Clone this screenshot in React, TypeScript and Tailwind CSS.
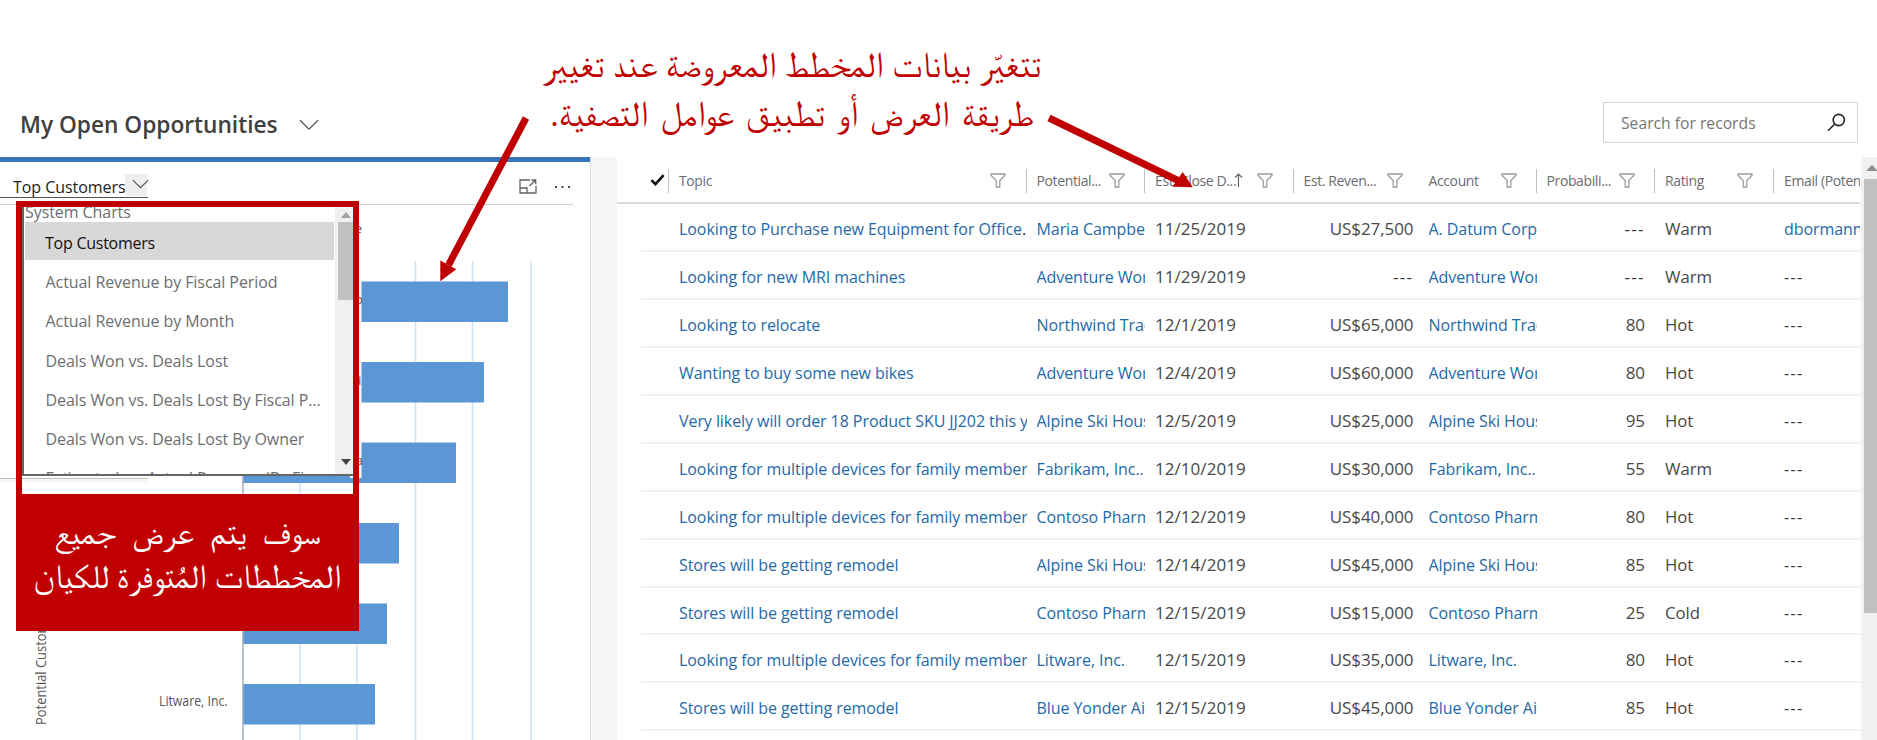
import React from "react";

type Row = {
  topic: string;
  customer: string;
  date: string;
  revenue: string;
  account: string;
  probability: string;
  rating: string;
  email: string;
};

const r = (
  topic: string,
  customer: string,
  date: string,
  revenue: string,
  account: string,
  probability: string,
  rating: string,
  email = "---",
): Row => ({ topic, customer, date, revenue, account, probability, rating, email });

const DEVICES = "Looking for multiple devices for family member";
const REMODEL = "Stores will be getting remodel";

const rows: Row[] = [
  r("Looking to Purchase new Equipment for Office.", "Maria Campbell", "11/25/2019", "US$27,500", "A. Datum Corp", "---", "Warm", "dbormann@"),
  r("Looking for new MRI machines", "Adventure Works", "11/29/2019", "---", "Adventure Works", "---", "Warm"),
  r("Looking to relocate", "Northwind Traders", "12/1/2019", "US$65,000", "Northwind Traders", "80", "Hot"),
  r("Wanting to buy some new bikes", "Adventure Works", "12/4/2019", "US$60,000", "Adventure Works", "80", "Hot"),
  r("Very likely will order 18 Product SKU JJ202 this year", "Alpine Ski House", "12/5/2019", "US$25,000", "Alpine Ski House", "95", "Hot"),
  r(DEVICES, "Fabrikam, Inc...", "12/10/2019", "US$30,000", "Fabrikam, Inc...", "55", "Warm"),
  r(DEVICES, "Contoso Pharma", "12/12/2019", "US$40,000", "Contoso Pharma", "80", "Hot"),
  r(REMODEL, "Alpine Ski House", "12/14/2019", "US$45,000", "Alpine Ski House", "85", "Hot"),
  r(REMODEL, "Contoso Pharma", "12/15/2019", "US$15,000", "Contoso Pharma", "25", "Cold"),
  r(DEVICES, "Litware, Inc.", "12/15/2019", "US$35,000", "Litware, Inc.", "80", "Hot"),
  r(REMODEL, "Blue Yonder Airlines", "12/15/2019", "US$45,000", "Blue Yonder Airlines", "85", "Hot"),
];

const GRID =
  "grid grid-cols-[38px_357.5px_118.5px_148.5px_125px_118px_118.5px_119px_76px]";

const Funnel = ({ className = "" }: { className?: string }) => (
  <svg className={`shrink-0 ${className}`} width="16" height="15" viewBox="0 0 16 15" fill="none" stroke="#9b9ba1" strokeWidth="1.3">
    <path d="M1 1h14v1.2L9.8 7.6V14H6.2V7.6L1 2.2z" />
  </svg>
);

const Chevron = ({ w = 20 }: { w?: number }) => (
  <svg width={w} height={w * 0.6} viewBox="0 0 20 12" fill="none" stroke="#555" strokeWidth="1.3">
    <path d="M1 1.2l9 9 9-9" />
  </svg>
);

const Dashes = () => <span className="tracking-[1.4px] text-[#333]">---</span>;

function HeadCell({ label, gap, line = true, sort = false }: { label: string; gap: string; line?: boolean; sort?: boolean }) {
  return (
    <div className="relative flex h-full items-center whitespace-nowrap">
      {line && <i className="absolute top-[11px] -left-[10.6px] h-6 w-px bg-[#c0c0c0]" />}
      <span className={`${gap} shrink-0`}>{label}</span>
      {sort && (
        <svg className="absolute left-[79px] top-[15px]" width="9" height="15" viewBox="0 0 9 15" fill="none" stroke="#666" strokeWidth="1.2">
          <path d="M4.5 14V1M1 4.5L4.5 1 8 4.5" />
        </svg>
      )}
      {gap !== "w-auto" && <Funnel />}
    </div>
  );
}

function RecordGrid() {
  return (
    <div className="relative flex min-w-0 flex-1 flex-col overflow-hidden">
      <div className={`${GRID} ml-6 h-[45px] w-[1219px] overflow-hidden pt-px text-[14px] tracking-[-0.38px] text-[#6b6b73]`}>
        <div className="flex items-center pl-[9px]">
          <svg width="15" height="12" viewBox="0 0 15 12" fill="none" stroke="#111" strokeWidth="2.6">
            <path d="M1.4 6.2l4 4L13.6 1.2" />
          </svg>
        </div>
        <HeadCell label="Topic" gap="w-[311px]" />
        <HeadCell label="Potential..." gap="w-[72px]" />
        <HeadCell label="Est. Close D..." gap="w-[102px]" sort />
        <HeadCell label="Est. Reven..." gap="w-[83px]" />
        <HeadCell label="Account" gap="w-[72px]" line={false} />
        <HeadCell label="Probabili..." gap="w-[72px]" />
        <HeadCell label="Rating" gap="w-[72px]" />
        <HeadCell label="Email (Potential" gap="w-auto" />
      </div>
      <div className="h-[2px] w-[1243px] bg-[#dcdbda]" />
      <div className="ml-6 w-[1220px] text-[16px] leading-[50px] tracking-[-0.07px] text-[#1f69a8]">
        {rows.map((row, i) => (
          <div
            key={i}
            className={`${GRID} h-[47.95px] overflow-hidden border-b-2 border-[#f1f1f1] whitespace-nowrap [&>div]:overflow-hidden`}
          >
            <div />
            <div className="mr-[9.5px]">
              {row.topic.endsWith(".") ? (
                <>
                  {row.topic.slice(0, -1)}
                  <span className="text-[#222]">.</span>
                </>
              ) : (
                row.topic
              )}
            </div>
            <div className="mr-[10px]">{row.customer}</div>
            <div className="text-[17px] tracking-[0.05px] text-[#484848]">{row.date}</div>
            <div className="pr-[15px] text-right text-[17px] text-[#484848]">
              {row.revenue === "---" ? <Dashes /> : row.revenue}
            </div>
            <div className="mr-[9.5px]">{row.account}</div>
            <div className="pr-[20px] text-right text-[17px] text-[#484848]">
              {row.probability === "---" ? <Dashes /> : row.probability}
            </div>
            <div className="text-[16.8px] text-[#484848]">{row.rating}</div>
            <div>{row.email === "---" ? <Dashes /> : row.email}</div>
          </div>
        ))}
      </div>
      <div className="absolute top-0 right-0 flex h-full w-4 flex-col items-end bg-[#f1f1f1]">
        <div className="flex h-[22px] w-full items-center justify-end overflow-hidden">
          <i className="-mr-[1px] border-x-[6px] border-b-[6px] border-transparent border-b-[#8f8f8f]" />
        </div>
        <div className="h-[434px] w-[13.5px] bg-[#c1c1c1]" />
      </div>
    </div>
  );
}

const bars = [265, 241, 213, 156, 144, 132];
const gridLines = [300, 357, 415.5, 472.5, 531];

function BarChart() {
  return (
    <svg className="absolute top-0 left-0" width="591" height="583" viewBox="0 157 591 583">
      {gridLines.map((x) => (
        <line key={x} x1={x} x2={x} y1="261" y2="740" stroke="#cfe2f9" strokeWidth="1.6" />
      ))}
      <line x1="243" x2="243" y1="261" y2="740" stroke="#a5b0c0" strokeWidth="1.6" />
      {bars.map((w, i) => (
        <rect key={i} x="243.5" y={281.5 + i * 80.5} width={w - 0.5} height="40.5" fill="#5b96d5" />
      ))}
      <rect x="350" y="205" width="11.5" height="273" fill="#fff" />
      <text x="227.5" y="706" textAnchor="end" fontSize="14" textLength="68.5" lengthAdjust="spacingAndGlyphs" fill="#555">Litware, Inc.</text>
      <text x="0" y="0" transform="translate(46 725) rotate(-90)" fontSize="14" textLength="116" lengthAdjust="spacingAndGlyphs" fill="#555">Potential Customer</text>
      <g fill="#555" fontSize="13.4" textAnchor="end">
        <text x="362" y="233">e</text>
        <text x="363" y="304">p</text>
        <text x="361.5" y="385">i</text>
        <text x="363" y="465">a</text>
      </g>
    </svg>
  );
}

const chartNames = [
  "Actual Revenue by Fiscal Period",
  "Actual Revenue by Month",
  "Deals Won vs. Deals Lost",
  "Deals Won vs. Deals Lost By Fiscal P...",
  "Deals Won vs. Deals Lost By Owner",
  "Estimated vs. Actual Revenue (By Fi...",
];

function ChartMenu() {
  return (
    <div className="absolute top-[44px] left-[16px] z-10 w-[343px]">
      <div className="h-[293px] border-6 border-b-0 border-[#c00000]">
        <div className="flex h-[269px] overflow-hidden border-b-2 border-l-2 border-[#666] bg-white text-[16px] tracking-[-0.07px]">
          <div className="w-[311px] pr-px pl-px whitespace-nowrap text-[#6e6e6e]">
            <div className="h-[15px] leading-[10px]">System Charts</div>
            <div className="h-[38px] bg-[#d8d8d8] pl-[20px] leading-[42px] tracking-[-0.25px] text-[#111]">Top Customers</div>
            <div className="pt-[3px]">
              {chartNames.map((n) => (
                <div key={n} className="h-[39.3px] pl-[20.5px] leading-[39px]">{n}</div>
              ))}
            </div>
          </div>
          <div className="flex flex-1 flex-col bg-[#f0f0f0]">
            <div className="flex h-[15px] items-center justify-center pl-1">
              <i className="border-x-[5px] border-b-[6px] border-transparent border-b-[#a0a0a0]" />
            </div>
            <div className="ml-[3px] h-[78px] bg-[#c1c1c1]" />
            <div className="mt-auto flex h-[24px] items-center justify-center pl-1">
              <i className="border-x-[5px] border-t-[6px] border-transparent border-t-[#444]" />
            </div>
          </div>
        </div>
      </div>
      <div
        dir="rtl"
        className="h-[137px] bg-[#c00000] pt-[18px] text-center font-['FreeSerif','Noto_Sans_Arabic'] text-[33.8px] leading-[44px] whitespace-nowrap text-white"
      >
        <div className="[word-spacing:8px]">سوف يتم عرض جميع</div>
        <div>المخططات المُتوفرة للكيان</div>
      </div>
    </div>
  );
}

function ChartPanel() {
  return (
    <div className="relative w-[591px] shrink-0 border-r border-[#dadada]">
      <BarChart />
      <div className="relative h-[5px] bg-[#3676b8]" />
      <div className="relative mr-[17px] flex h-[43px] items-start justify-between border-b border-[#cfcfcf]">
        <div className="mt-[12px] flex h-[24px] w-[148px] border-b border-[#555] pl-[13px]">
          <span className="w-[112px] text-[16px] leading-[26px] tracking-[-0.05px] whitespace-nowrap text-[#222]">Top Customers</span>
          <span className="flex h-[22px] w-[22px] items-start justify-center bg-[#efefef] pt-[5px] pl-[7px]">
            <span className="-mr-[2px]"><Chevron w={17} /></span>
          </span>
        </div>
        <div className="mt-[17px] flex items-center gap-[18px]">
          <svg width="18" height="15" viewBox="0 0 18 15" fill="none" stroke="#606068" strokeWidth="1.3">
            <path d="M11 1H1v13h16V7M1 9h7v5M10.5 7L16.5 1M12.5 1h4.2v4.2" />
          </svg>
          <svg width="18" height="4" viewBox="0 0 18 4" fill="#4a4a60">
            <rect x="0" y="1" width="2" height="2" />
            <rect x="6.5" y="1" width="2" height="2" />
            <rect x="13" y="1" width="2" height="2" />
          </svg>
        </div>
      </div>
      <div className="absolute top-[321px] left-0 h-px w-[148px] bg-[#bdbdbd] shadow-[0_2px_3px_rgba(0,0,0,0.15)]" />
      <ChartMenu />
    </div>
  );
}

function Callout() {
  return (
    <>
      <div
        dir="rtl"
        className="absolute top-[42px] left-[492px] w-[600px] text-center font-['FreeSerif','Noto_Sans_Arabic'] text-[36px] leading-[49px] whitespace-nowrap text-[#c00000]"
      >
        <div>تتغيّر بيانات المخطط المعروضة عند تغيير</div>
        <div className="[word-spacing:3.5px]">طريقة العرض أو تطبيق عوامل التصفية.</div>
      </div>
      <svg className="pointer-events-none absolute top-0 left-0 z-20" width="1300" height="300" stroke="#c00000" fill="#c00000">
        <path d="M526 118L448.5 265" strokeWidth="7" />
        <path d="M440.3 260.5l16 8.7-16 12z" stroke="none" />
        <path d="M1049 118l129 62.5" strokeWidth="7" />
        <path d="M1182.7 172l10.2 15.3-20.5-.5z" stroke="none" />
      </svg>
    </>
  );
}

export default function App() {
  return (
    <div className="relative flex h-[740px] w-[1877px] flex-col overflow-hidden bg-white font-['Open_Sans','Noto_Sans',sans-serif]">
      <header className="flex h-[157px] shrink-0 items-start justify-between pt-[102px] pr-[19px] pl-[20px]">
        <div className="flex items-center gap-[21px] pt-[5px]">
          <h1 className="w-[258px] text-[22.7px] leading-[36px] font-semibold whitespace-nowrap text-[#404040]">My Open Opportunities</h1>
          <Chevron />
        </div>
        <div className="flex h-[41px] w-[255px] items-center justify-between border border-[#d5d5d5] pt-[3px] pr-[11px] pl-[17px] text-[15.7px] text-[#767676]">
          <span>Search for records</span>
          <svg className="-mt-[4px]" width="19" height="19" viewBox="0 0 19 19" fill="none" stroke="#222" strokeWidth="1.6">
            <circle cx="11.8" cy="7" r="5.6" />
            <path d="M7.8 11L1 17.8" />
          </svg>
        </div>
      </header>
      <main className="flex min-h-0 flex-1">
        <ChartPanel />
        <div className="w-[26px] shrink-0 bg-[#f7f6f5]" />
        <RecordGrid />
      </main>
      <Callout />
    </div>
  );
}
